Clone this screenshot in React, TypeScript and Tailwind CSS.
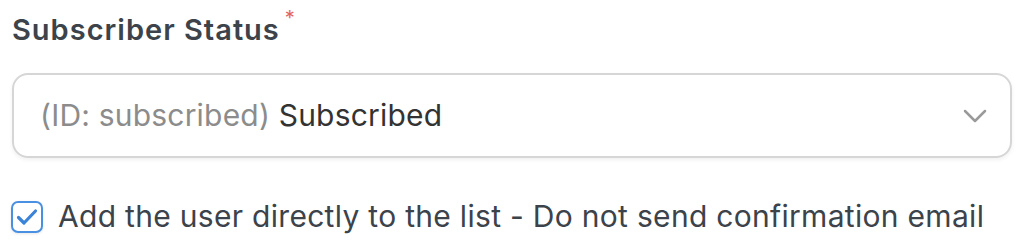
import React, { useState } from 'react';

export default function App() {
  const [checked, setChecked] = useState(true);

  return (
    <div className="w-[1024px] h-[244px] bg-white px-3 pt-[10px] font-['Inter','Noto_Sans',sans-serif]">
      <label className="flex items-start text-[29px] font-semibold tracking-[1px] text-[#3c434a] leading-[40px]">
        Subscriber Status
        <span className="ml-[5px] -mt-[2px] text-[20px] leading-[20px] text-[#e2665f] font-normal">*</span>
      </label>

      <div className="mt-[23px] h-[85px] w-[1000px] rounded-[16px] border-2 border-[#d6d6d6] shadow-[0_2px_4px_rgba(0,0,0,0.06)] flex items-center justify-between pl-[26px] pr-[23px]">
        <span className="text-[30px] tracking-[0.2px] text-[#333]">
          <span className="text-[#8c8c8c]">(ID: subscribed)</span> Subscribed
        </span>
        <svg width="24" height="14" viewBox="0 0 24 14" fill="none" stroke="#9a9a9a" strokeWidth="2.5" strokeLinecap="round" strokeLinejoin="round">
          <path d="M2 2l10 10 10-10" />
        </svg>
      </div>

      <label className="mt-[36px] -ml-px flex items-center gap-[15px] cursor-pointer">
        <button
          type="button"
          onClick={() => setChecked(!checked)}
          className="w-[32px] h-[32px] rounded-[7px] border-2 border-[#4a90e2] bg-white flex items-center justify-center shadow-[0_1px_3px_rgba(0,0,0,0.1)]"
        >
          {checked && (
            <svg width="22" height="18" viewBox="0 0 22 18" fill="none" stroke="#3a83d6" strokeWidth="3.2" strokeLinecap="round" strokeLinejoin="round">
              <path d="M2.5 9.5l5.5 5.5L19.5 3" />
            </svg>
          )}
        </button>
        <span className="text-[30px] tracking-[0.3px] text-[#3c434a]">Add the user directly to the list - Do not send confirmation email</span>
      </label>
    </div>
  );
}
